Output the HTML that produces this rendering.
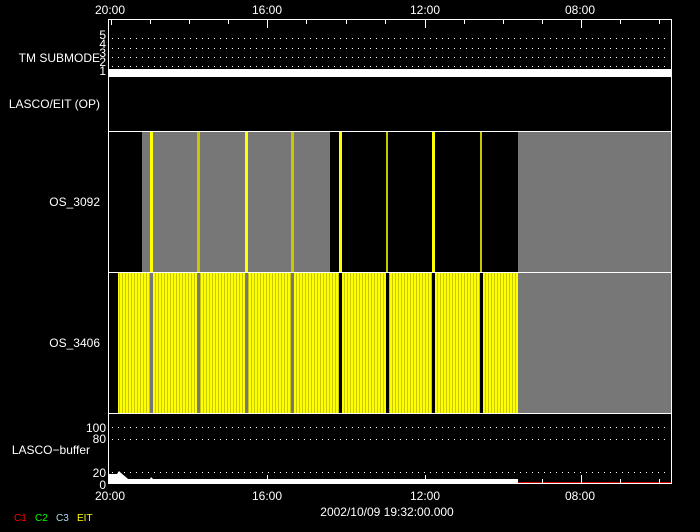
<!DOCTYPE html>
<html><head><style>
body{margin:0;background:#000;width:700px;height:532px;overflow:hidden}
svg{display:block}
text{font-family:"Liberation Sans",sans-serif;font-size:12px;fill:#fff}
</style></head><body>
<svg width="700" height="532" viewBox="0 0 700 532">
<defs>
<pattern id="ys" width="3" height="10" patternUnits="userSpaceOnUse">
<rect width="3" height="10" fill="#ffff00"/><rect x="2" width="1" height="10" fill="#c8c800"/>
</pattern>
<pattern id="dot" width="6" height="1" patternUnits="userSpaceOnUse"><rect x="4" width="1" height="1" fill="#fff"/></pattern>
</defs>
<text x="110" y="14" text-anchor="middle">20:00</text>
<text x="267" y="14" text-anchor="middle">16:00</text>
<text x="425" y="14" text-anchor="middle">12:00</text>
<text x="580" y="14" text-anchor="middle">08:00</text>
<text x="110" y="500" text-anchor="middle">20:00</text>
<text x="267" y="500" text-anchor="middle">16:00</text>
<text x="425" y="500" text-anchor="middle">12:00</text>
<text x="580" y="500" text-anchor="middle">08:00</text>
<text x="387" y="516" text-anchor="middle">2002/10/09 19:32:00.000</text>
<text x="14" y="521" style="fill:#ff0000;font-size:10px">C1</text>
<text x="35" y="521" style="fill:#00ff00;font-size:10px">C2</text>
<text x="56" y="521" style="fill:#aaddee;font-size:10px">C3</text>
<text x="77" y="521" style="fill:#ffff00;font-size:10px">EIT</text>
<text x="100" y="62" text-anchor="end">TM SUBMODE</text>
<text x="100" y="108" text-anchor="end">LASCO/EIT (OP)</text>
<text x="100" y="206" text-anchor="end">OS_3092</text>
<text x="100" y="347" text-anchor="end">OS_3406</text>
<text x="90" y="454" text-anchor="end">LASCO−buffer</text>
<g style="font-size:9px">
<text x="106" y="39" text-anchor="end">5</text>
<text x="106" y="48" text-anchor="end">4</text>
<text x="106" y="57" text-anchor="end">3</text>
<text x="106" y="66" text-anchor="end">2</text>
<text x="106" y="75" text-anchor="end">1</text>
</g>
<text x="106" y="432" text-anchor="end">100</text>
<text x="106" y="443" text-anchor="end">80</text>
<text x="106" y="477" text-anchor="end">20</text>
<text x="106" y="489" text-anchor="end">0</text>
<rect x="110" y="38" width="560" height="1" fill="url(#dot)"/>
<rect x="110" y="48" width="560" height="1" fill="url(#dot)"/>
<rect x="110" y="57" width="560" height="1" fill="url(#dot)"/>
<rect x="110" y="66" width="560" height="1" fill="url(#dot)"/>
<rect x="109" y="69" width="562" height="8" fill="#fff"/>
<rect x="142" y="132" width="188" height="140" fill="#777"/>
<rect x="518" y="132" width="153" height="140" fill="#777"/>
<g fill="#ffff00">
<rect x="150" y="132" width="3" height="140"/><rect x="197" y="132" width="3" height="140" fill="#c8c800"/>
<rect x="245" y="132" width="3" height="140"/><rect x="291" y="132" width="3" height="140" fill="#c8c800"/>
<rect x="339" y="132" width="3" height="140"/><rect x="386" y="132" width="2" height="140" fill="#c8c800"/>
<rect x="432" y="132" width="3" height="140"/><rect x="480" y="132" width="2" height="140" fill="#c8c800"/>
</g>
<rect x="118" y="273" width="400" height="140" fill="url(#ys)"/>
<rect x="518" y="273" width="153" height="140" fill="#777"/>
<g fill="#777">
<rect x="150" y="273" width="3" height="140"/><rect x="197" y="273" width="3" height="140"/>
<rect x="245" y="273" width="3" height="140"/><rect x="291" y="273" width="3" height="140"/>
</g>
<g fill="#000">
<rect x="339" y="273" width="3" height="140"/><rect x="386" y="273" width="3" height="140"/>
<rect x="432" y="273" width="3" height="140"/><rect x="480" y="273" width="3" height="140"/>
</g>
<rect x="110" y="427" width="560" height="1" fill="url(#dot)"/>
<rect x="110" y="439" width="560" height="1" fill="url(#dot)"/>
<rect x="110" y="472" width="560" height="1" fill="url(#dot)"/>
<polygon points="109,483 109,474 117,474 119,471 121,473 127,478 128,479 150,479 151,477 153,479 518,479 518,483" fill="#fff"/>
<rect x="518" y="482" width="153" height="1" fill="#c00"/>
<g fill="#fff">
<rect x="108" y="19" width="1" height="465"/>
<rect x="671" y="19" width="1" height="465"/>
<rect x="108" y="19" width="564" height="1"/>
<rect x="108" y="131" width="564" height="1"/>
<rect x="108" y="272" width="564" height="1"/>
<rect x="108" y="413" width="564" height="1"/>
<rect x="108" y="483" width="564" height="1"/>
</g>
<g stroke="#fff" stroke-width="1">
<path d="M111.5 20v5M150.5 20v4M189.5 20v4M228.5 20v4M267.5 20v8M306.5 20v4M346.5 20v4M385.5 20v4M425.5 20v8M464.5 20v4M503.5 20v4M542.5 20v4M581.5 20v8M620.5 20v4M659.5 20v4"/>
<path d="M111.5 483v-5M150.5 483v-4M189.5 483v-4M228.5 483v-4M267.5 483v-8M306.5 483v-4M346.5 483v-4M385.5 483v-4M425.5 483v-8M464.5 483v-4M503.5 483v-4M542.5 483v-4M581.5 483v-8M620.5 483v-4M659.5 483v-4"/>
</g>
</svg>
</body></html>
